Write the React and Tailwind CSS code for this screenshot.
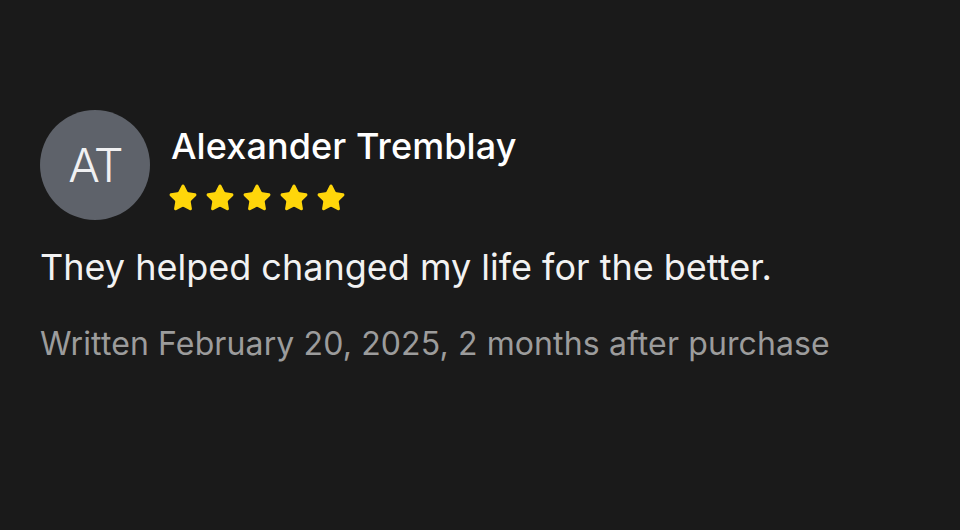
import { Star } from 'lucide-react';

export default function App() {
  return (
    <div className="w-[960px] h-[530px] bg-[#1a1a1a] px-[40px] pt-[110px]" style={{ fontFamily: 'Inter, "Noto Sans", sans-serif' }}>
      <div className="flex items-start gap-[21px]">
        <div className="w-[110px] h-[110px] rounded-full bg-[#5e626a] flex items-center justify-center text-[47px] font-light text-[#f0f0f2] tracking-[-2px]">
          AT
        </div>
        <div className="pt-[14px]">
          <div className="text-[36px] leading-[44px] text-white font-medium tracking-[0.1px]">Alexander Tremblay</div>
          <div className="flex gap-[7px] mt-[15px] -ml-[3px]">
            {[0, 1, 2, 3, 4].map((i) => (
              <Star key={i} size={30} className="text-[#ffd60a] fill-[#ffd60a]" strokeWidth={1.5} strokeLinejoin="round" />
            ))}
          </div>
        </div>
      </div>
      <p className="mt-[25px] text-[36px] leading-[44px] text-[#f2f2f2]">They helped changed my life for the better.</p>
      <p className="mt-[35px] text-[32px] leading-[40px] text-[#9c9c9c] tracking-[0.12px]">Written February 20, 2025, 2 months after purchase</p>
    </div>
  );
}
